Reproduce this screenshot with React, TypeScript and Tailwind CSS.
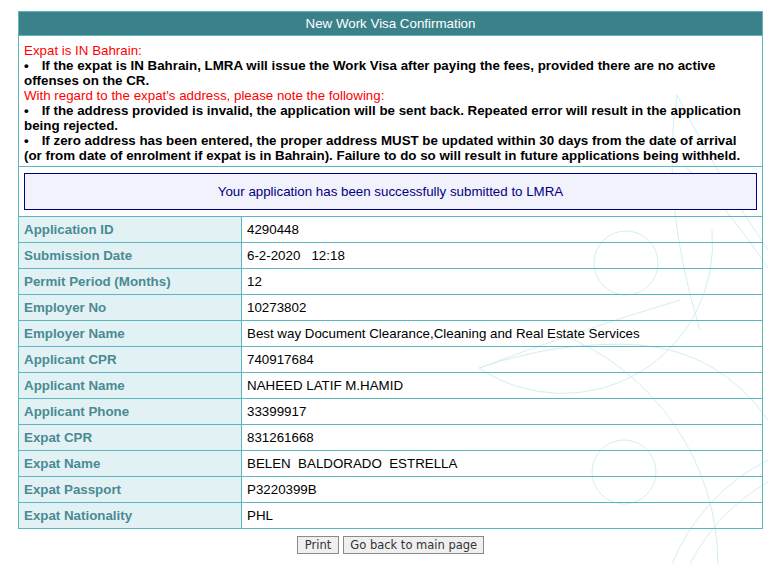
import React from "react";

const rows: [string, string][] = [
  ["Application ID", "4290448"],
  ["Submission Date", "6-2-2020   12:18"],
  ["Permit Period (Months)", "12"],
  ["Employer No", "10273802"],
  ["Employer Name", "Best way Document Clearance,Cleaning and Real Estate Services"],
  ["Applicant CPR", "740917684"],
  ["Applicant Name", "NAHEED LATIF M.HAMID"],
  ["Applicant Phone", "33399917"],
  ["Expat CPR", "831261668"],
  ["Expat Name", "BELEN  BALDORADO  ESTRELLA"],
  ["Expat Passport", "P3220399B"],
  ["Expat Nationality", "PHL"],
];

function Bullet({ children }: { children: React.ReactNode }) {
  return (
    <div className="font-bold text-black">
      <span className="mr-[13px]">•</span>
      {children}
    </div>
  );
}

function Watermark() {
  return (
    <svg
      className="absolute left-0 top-0 pointer-events-none"
      width="768"
      height="564"
      viewBox="0 0 768 564"
      fill="none"
      stroke="#d3eef1"
      strokeWidth="1"
    >
      <circle cx="626" cy="263" r="32" />
      <circle cx="624" cy="472" r="32" />
      <path d="M560 334 A248 248 0 0 1 718 565" />
      <path d="M479 368 A150 150 0 0 0 712 230" />
      <path d="M479 368 Q580 330 680 300" />
      <path d="M479 368 Q560 340 640 345 Q720 352 768 420" />
      <path d="M677 95 Q660 200 700 330" />
      <path d="M677 95 Q720 180 768 250" />
      <path d="M684 165 Q730 210 768 268" />
      <path d="M768 460 A200 200 0 0 0 672 564" />
      <path d="M768 482 A200 200 0 0 0 690 564" />
    </svg>
  );
}

export default function App() {
  return (
    <div className="relative w-[768px] h-[564px] overflow-hidden bg-white font-['Liberation_Sans',Arial,sans-serif] text-[13.33px] leading-[15px]">
      <Watermark />
      <div className="relative ml-[18px] mt-[11px] w-[745px] border border-[#5bb6c0]">
        <div className="h-[24px] bg-[#3b8189] text-white flex items-center justify-center border-b border-[#5bb6c0]">
          New Work Visa Confirmation
        </div>
        <div className="pt-[7px] pb-[3px] px-[5px] border-b border-[#5bb6c0]">
          <div className="text-[#ff0000]">Expat is IN Bahrain:</div>
          <Bullet>
            If the expat is IN Bahrain, LMRA will issue the Work Visa after paying the fees, provided there are no active offenses on the CR.
          </Bullet>
          <div className="text-[#ff0000]">With regard to the expat's address, please note the following:</div>
          <Bullet>
            If the address provided is invalid, the application will be sent back. Repeated error will result in the application being rejected.
          </Bullet>
          <Bullet>
            If zero address has been entered, the proper address MUST be updated within 30 days from the date of arrival (or from date of enrolment if expat is in Bahrain). Failure to do so will result in future applications being withheld.
          </Bullet>
        </div>
        <div className="px-[5px] py-[6px] border-b border-[#5bb6c0]">
          <div className="h-[37px] border border-[#000080] bg-[#f2f2fc] text-[#000080] flex items-center justify-center">
            Your application has been successfully submitted to LMRA
          </div>
        </div>
        {rows.map(([label, value], i) => (
          <div
            key={label}
            className={
              i < rows.length - 1
                ? "flex h-[26px] border-b border-[#5bb6c0]"
                : "flex h-[25px]"
            }
          >
            <div className="w-[223px] shrink-0 bg-[#e2f2f4] border-r border-[#5bb6c0] pl-[5px] flex items-center font-bold text-[#4a8a93]">
              {label}
            </div>
            <div className="flex-1 pl-[5px] flex items-center text-black whitespace-pre">
              {value}
            </div>
          </div>
        ))}
      </div>
      <div className="relative ml-[18px] w-[745px] mt-[7px] flex justify-center gap-[4px] font-['DejaVu_Sans',sans-serif] text-[11.5px] leading-[16px] text-[#333]">
        <button className="h-[18px] px-[7px] border border-[#8a8a8a] bg-[#efefef]">Print</button>
        <button className="h-[18px] px-[6px] border border-[#8a8a8a] bg-[#efefef]">Go back to main page</button>
      </div>
    </div>
  );
}
